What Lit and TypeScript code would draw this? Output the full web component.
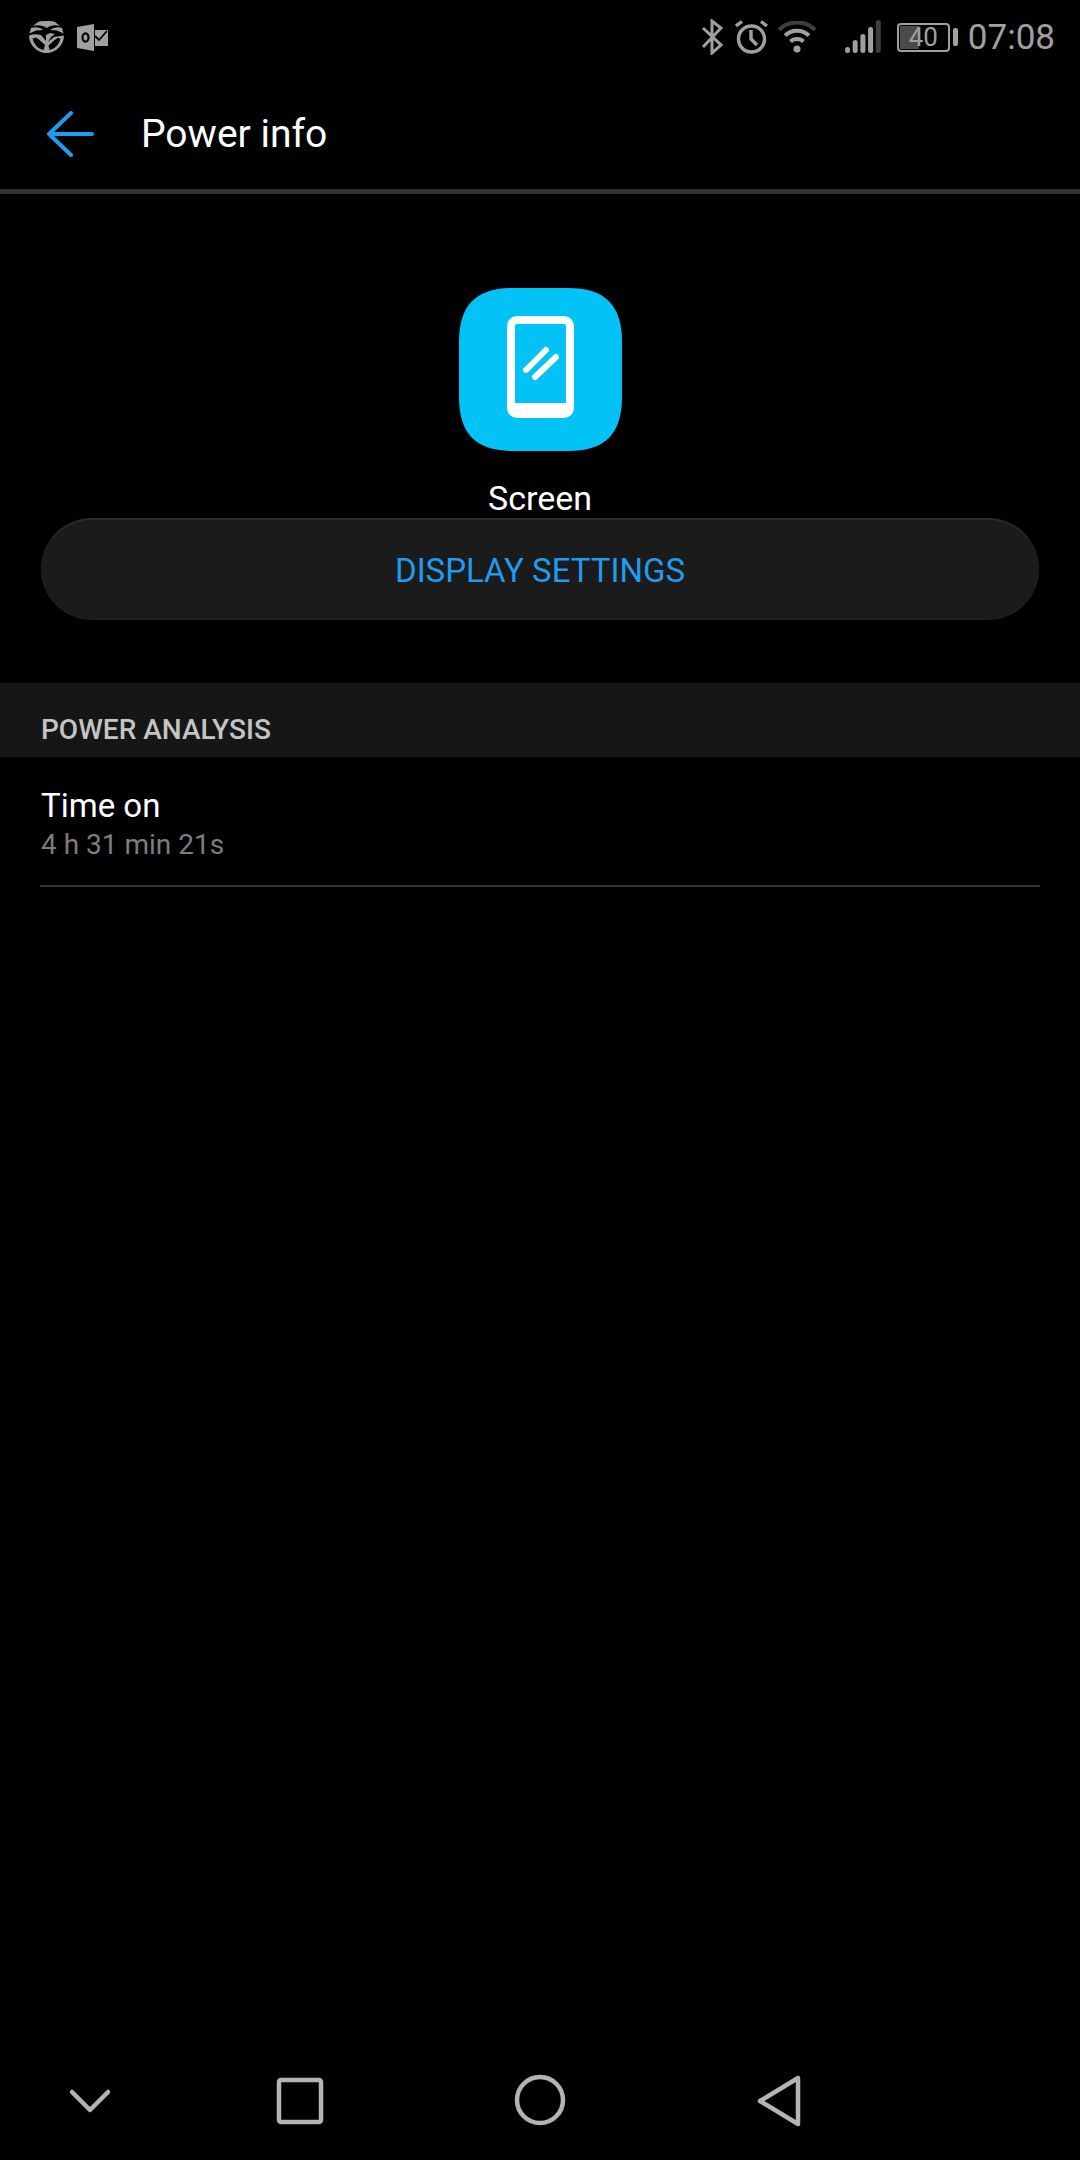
import { LitElement, html, css } from 'lit';
import { customElement } from 'lit/decorators.js';

@customElement('app-root')
export class AppRoot extends LitElement {
  static override styles = css`
    :host {
      display: block;
      width: 1080px;
      height: 2160px;
      background: #000;
      font-family: Roboto, 'Liberation Sans', sans-serif;
      color: #fff;
    }

    .page {
      display: flex;
      flex-direction: column;
      height: 2160px;
    }

    svg { display: block; flex: none; }

    /* Status bar */
    .status {
      display: flex;
      align-items: center;
      height: 74px;
      padding: 0 25px 0 29px;
      flex: none;
      color: #a0a0a0;
    }
    .status-left { display: flex; align-items: center; gap: 13px; }
    .status-right { display: flex; align-items: center; margin-left: auto; }
    .alarm { margin-left: 12px; }
    .wifi { margin-left: 10px; }
    .signal { margin-left: 29px; }
    .battery {
      position: relative;
      width: 53px;
      height: 29px;
      box-sizing: border-box;
      border: 2px solid #a0a0a0;
      border-radius: 4px;
      margin-left: 16px;
      display: flex;
      align-items: center;
      justify-content: center;
      font-size: 26px;
      line-height: 1;
    }
    .battery-fill {
      position: absolute;
      left: 1px;
      top: 1px;
      bottom: 1px;
      width: 40%;
      background: #4a4a4a;
    }
    .battery span { position: relative; }
    .battery-nub {
      width: 5px;
      height: 18px;
      border-radius: 2px;
      background: #a0a0a0;
      margin-left: 3px;
    }
    .clock {
      font-size: 35px;
      line-height: 1;
      margin-left: 10px;
    }

    /* Header */
    .header {
      display: flex;
      align-items: center;
      height: 110px;
      padding: 5px 0 0 47px;
      flex: none;
      border-bottom: 5px solid #333;
    }
    .title {
      font-size: 39px;
      line-height: 1;
      margin-left: 47px;
    }

    /* Hero */
    .hero {
      display: flex;
      flex-direction: column;
      align-items: center;
      padding-top: 94px;
      flex: none;
    }
    .app-name {
      font-size: 34px;
      line-height: 40px;
      margin-top: 27px;
    }
    .action {
      box-sizing: border-box;
      width: 998px;
      height: 102px;
      padding-top: 1px;
      border-radius: 51px;
      background: #1b1b1b;
      border: 1px solid #222;
      border-top: 2px solid #2c2c2c;
      display: flex;
      align-items: center;
      justify-content: center;
      color: #1f9bf0;
      font-size: 33px;
    }

    /* Section */
    .section {
      margin-top: 63px;
      height: 74px;
      background: #161616;
      padding: 33px 41px 0;
      box-sizing: border-box;
      font-size: 28px;
      font-weight: 500;
      line-height: 28px;
      color: #c4c4c4;
      flex: none;
    }
    .row {
      margin: 0 40px;
      height: 130px;
      box-sizing: border-box;
      border-bottom: 2px solid #333;
      padding: 29px 1px 0;
      flex: none;
    }
    .row-title { font-size: 33px; line-height: 40px; }
    .row-sub { font-size: 28px; line-height: 36px; color: #7d7d7d; margin-top: 1px; }

    /* Nav bar */
    .nav {
      margin-top: auto;
      position: relative;
      height: 160px;
      flex: none;
    }
    .nav svg { position: absolute; left: 0; top: 0; }
  `;

  override render() {
    return html`
      <div class="page">
        <div class="status">
          <div class="status-left">
            <svg width="35" height="32" viewBox="0 0 35 32" fill="#a0a0a0">
              <path d="M9 1 C14 -0.5 21 -0.5 26 1 L31 5 C26 3.5 21 4.5 18 7 C14 4.5 9 3.5 4 5Z"/>
              <path d="M2 7 C7 5.5 11 6.5 14 9 L7 9.5 L0.5 12.5Z M21 9 C25 6.5 29 5.5 33 7 L34.5 12.5 L28 9.5Z"/>
              <path d="M0 14.5 C4 13 8 13 12 14 L17 20 L17 14 L21 12 L26 13 L22 16 L19 21 L25 16 L35 14.5 C35 24 27 32 17.5 32 C8 32 0 24 0 14.5Z"/>
              <path d="M3.5 17.5 C5 24 10 28.4 14.5 29 L16 24 L10 18.5 L7 16.5Z M31.5 17.5 C30 24 25 28.4 20.5 29 L19.5 24.5 L25 19.5 L28.5 17Z" fill="#000"/>
            </svg>
            <svg width="31" height="27" viewBox="0 0 31 27">
              <path d="M0 3 L17 0 L17 27 L0 24Z" fill="#a0a0a0"/>
              <path d="M18 6 L31 6 L31 22 L18 22Z" fill="#a0a0a0"/>
              <ellipse cx="8.5" cy="13.5" rx="3" ry="4.2" fill="none" stroke="#000" stroke-width="2.2"/>
              <path d="M18 12 L22 16 L30 7" fill="none" stroke="#000" stroke-width="1.8"/>
            </svg>
          </div>
          <div class="status-right">
            <svg width="22" height="36" viewBox="0 0 22 36" fill="none" stroke="#a0a0a0" stroke-width="3">
              <path d="M2 9 L20 26 L11 34 L11 2 L20 9 L2 28"/>
            </svg>
            <svg class="alarm" width="33" height="34" viewBox="0 0 33 34" fill="none" stroke="#a0a0a0" stroke-width="3.4">
              <circle cx="16.5" cy="19" r="13"/>
              <path d="M16 10 L16 19 L22 25"/>
              <path d="M1 6 L7 1.5 M32 6 L26 1.5"/>
            </svg>
            <svg class="wifi" width="38" height="32" viewBox="0 0 38 32" fill="none">
              <path d="M1 9 C10 -1 28 -1 37 9" stroke="#3e3e3e" stroke-width="4"/>
              <path d="M7 14.5 C14 8 24 8 31 14.5" stroke="#a0a0a0" stroke-width="4"/>
              <path d="M12.5 20.5 C16 17 22 17 25.5 20.5" stroke="#a0a0a0" stroke-width="4"/>
              <circle cx="19" cy="28" r="3.5" fill="#a0a0a0"/>
            </svg>
            <svg class="signal" width="36" height="34" viewBox="0 0 36 34">
              <rect x="0" y="27" width="5" height="6" rx="2.5" fill="#a0a0a0"/>
              <rect x="7.7" y="20" width="5" height="13" rx="2.5" fill="#a0a0a0"/>
              <rect x="15.4" y="14" width="5" height="19" rx="2.5" fill="#a0a0a0"/>
              <rect x="23.1" y="7" width="5" height="26" rx="2.5" fill="#a0a0a0"/>
              <rect x="30.8" y="0" width="5" height="33" rx="2.5" fill="#3e3e3e"/>
            </svg>
            <div class="battery"><div class="battery-fill"></div><span>40</span></div>
            <div class="battery-nub"></div>
            <div class="clock">07:08</div>
          </div>
        </div>

        <div class="header">
          <svg width="47" height="46" viewBox="0 0 47 46" fill="none" stroke="#1f9bf0" stroke-width="4" stroke-linecap="round" stroke-linejoin="round">
            <path d="M24 2 L2 23 L24 44 M2 23 L45 23"/>
          </svg>
          <div class="title">Power info</div>
        </div>

        <div class="hero">
          <svg width="163" height="163" viewBox="0 0 163 163">
            <path d="M54 0 H109 C146 0 163 17 163 54 V109 C163 146 146 163 109 163 H54 C17 163 0 146 0 109 V54 C0 17 17 0 54 0Z" fill="#03c2f5"/>
            <g transform="translate(48 28)">
              <rect x="4" y="4" width="59" height="94" rx="6" fill="none" stroke="#fff" stroke-width="8"/>
              <rect x="4" y="87" width="59" height="13" fill="#fff"/>
              <path d="M19 54 L39 34 M28 61 L49 41" stroke="#fff" stroke-width="6" stroke-linecap="round"/>
            </g>
          </svg>
          <div class="app-name">Screen</div>
          <div class="action">DISPLAY SETTINGS</div>
        </div>

        <div class="section">POWER ANALYSIS</div>
        <div class="row">
          <div class="row-title">Time on</div>
          <div class="row-sub">4 h 31 min 21s</div>
        </div>

        <div class="nav">
          <svg width="1080" height="160" viewBox="0 2000 1080 160" fill="none" stroke="#b4b4b4" stroke-width="4.5" stroke-linejoin="round" stroke-linecap="round">
            <path d="M72 2092 L90 2110 L108 2092"/>
            <rect x="279" y="2080" width="42" height="42" rx="2"/>
            <circle cx="540" cy="2100" r="23"/>
            <path d="M798 2078 L760 2101 L798 2124Z"/>
          </svg>
        </div>
      </div>
    `;
  }
}
